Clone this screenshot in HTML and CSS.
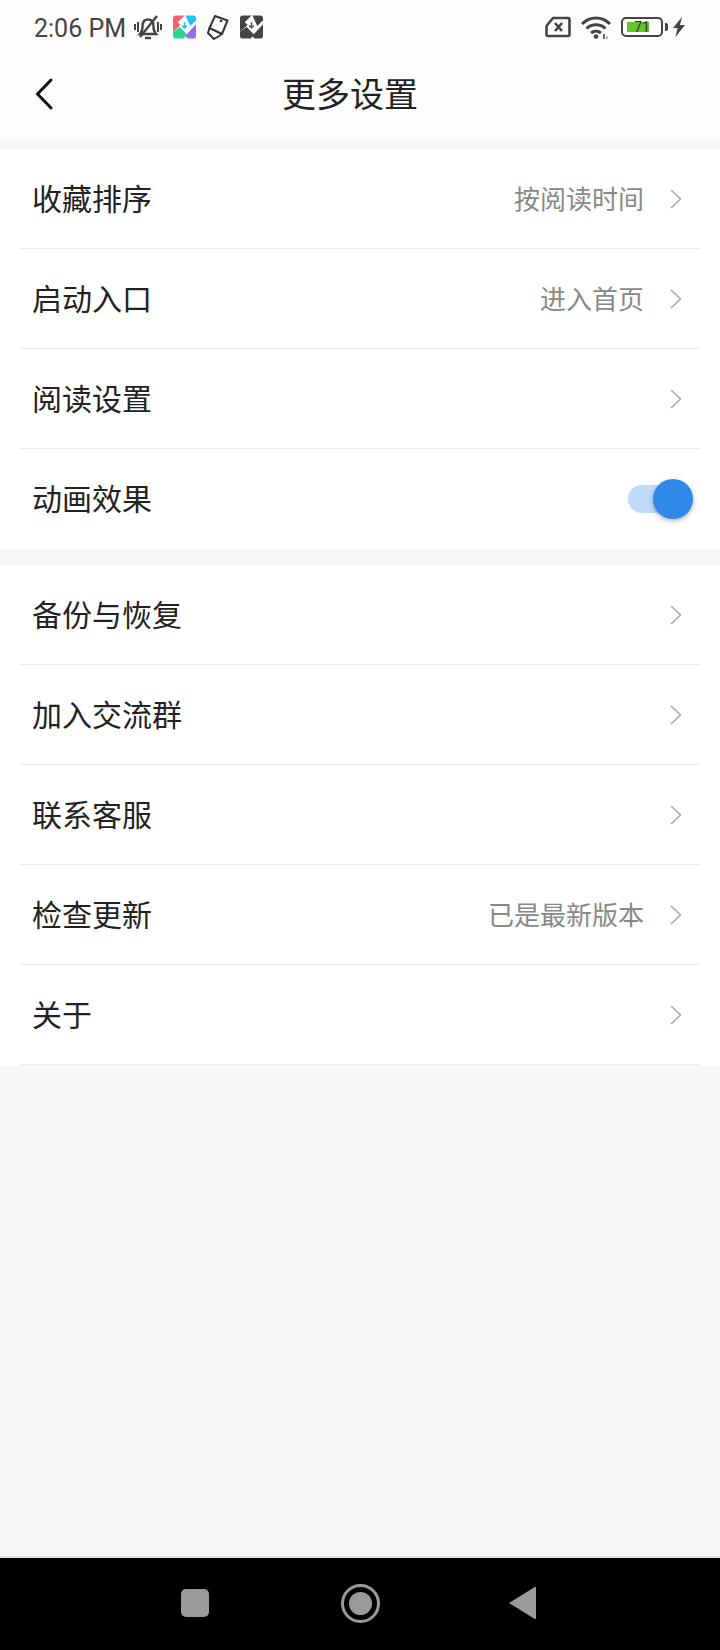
FILE: index.html
```html
<!DOCTYPE html>
<html lang="zh-CN">
<head>
    <meta charset="UTF-8">
    <title>更多设置</title>
    <link rel="stylesheet" href="styles.css">
</head>
<body>
    <div class="phone">
        <div class="status-bar">
            <div class="status-left">
                <span class="clock">2:06 PM</span>
                <svg width="28" height="26" viewBox="0 0 28 26" fill="none" stroke="#444" stroke-width="2.400">
                    <path d="M6 20c2-2 2.500-4 2.500-7.500C8.500 8 10.500 5.500 14 5.500s5.500 2.500 5.500 7c0 3.500.5 5.500 2.500 7.500z"/>
                    <path d="M11 24h6" stroke-width="2.400"/>
                    <path d="M1 10v6M4 8v10M24 8v10M27 10v6" stroke-width="2"/>
                    <path d="M6 23L23 2" stroke-width="2.400"/>
                </svg>
                <svg width="23" height="24" viewBox="0 0 24 24">
                    <path d="M3 0h9L5 7l3 3-8 7V3a3 3 0 0 1 3-3z" fill="#ff5a6e"/>
                    <path d="M13 0h8a3 3 0 0 1 3 3v2l-6 6z" fill="#1cc4f4"/>
                    <path d="M7 12l8 8-4 4H3a3 3 0 0 1-3-3v-4z" fill="#27d68c"/>
                    <path d="M24 9v12a3 3 0 0 1-3 3h-6l-2-3z" fill="#9a6af0"/>
                    <path d="M12 7v6M9.500 10.500l2.500 2.500 2.500-2.500" fill="none" stroke="#25bfe0" stroke-width="1.600"/>
                </svg>
                <svg width="22" height="26" viewBox="0 0 22 26" fill="none" stroke="#333" stroke-width="2" stroke-linejoin="round">
                    <path d="M8 2l12.500 4.500L15 20 2.500 14z"/>
                    <path d="M2.500 14L1 19l6 6 6-3.500 1.500-2"/>
                    <circle cx="14" cy="7" r="1.300" fill="#333" stroke="none"/>
                </svg>
                <svg width="23" height="24" viewBox="0 0 24 24" fill="#444">
                    <path d="M3 0h9L5 7l3 3-8 7V3a3 3 0 0 1 3-3z"/>
                    <path d="M13 0h8a3 3 0 0 1 3 3v2l-6 6z"/>
                    <path d="M7 12l8 8-4 4H3a3 3 0 0 1-3-3v-4z"/>
                    <path d="M24 9v12a3 3 0 0 1-3 3h-6l-2-3z"/>
                    <path d="M12 7v6M9.500 10.500l2.500 2.500 2.500-2.500" fill="none" stroke="#555" stroke-width="1.600"/>
                </svg>
            </div>
            <div class="status-right">
                <svg width="26" height="22" viewBox="0 0 26 22" fill="none" stroke="#444" stroke-width="2.600" stroke-linejoin="round">
                    <path d="M8 2h15a1.500 1.500 0 0 1 1.500 1.500v15a1.500 1.500 0 0 1-1.500 1.500H3a1.500 1.500 0 0 1-1.500-1.500V10z"/>
                    <path d="M10 7l7 8M17 7l-7 8"/>
                </svg>
                <svg width="30" height="24" viewBox="0 0 30 24" fill="none" stroke="#444" stroke-width="3">
                    <path d="M1 9c8-8 20-8 28 0"/>
                    <path d="M5.500 13.500c5.500-5 13.500-5 19 0"/>
                    <path d="M10 18c3-2.500 7-2.500 10 0"/>
                    <circle cx="15" cy="21.500" r="2.300" fill="#444" stroke="none"/>
                    <path d="M23 24v-5" stroke-width="1.600"/>
                    <path d="M26 24v-3" stroke="#aaa" stroke-width="1.600"/>
                </svg>
                <div class="battery">
                    <div class="battery-body">
                        <div class="battery-fill"></div>
                        <span class="battery-num">71</span>
                    </div>
                    <div class="battery-cap"></div>
                </div>
                <svg class="ico-bolt" width="12" height="20" viewBox="0 0 12 20" fill="#444">
                    <path d="M9 0L0 11h4.500L2.500 20 12 8H7z"/>
                </svg>
            </div>
        </div>

        <div class="header">
            <svg class="back" width="20" height="32" viewBox="0 0 20 32" fill="none" stroke="#111" stroke-width="3" stroke-linecap="round" stroke-linejoin="round">
                <path d="M17 2L3.500 16 17 30"/>
            </svg>
            <div class="title">更多设置</div>
        </div>

        <div class="content">
            <div class="section">
                <div class="row">
                    <span class="row-label">收藏排序</span>
                    <span class="row-value">按阅读时间</span>
                    <svg class="chevron" width="14" height="22" viewBox="0 0 14 22" fill="none" stroke="#a6a6a6" stroke-width="1.500"><path d="M2 2l9.500 9L2 20"/></svg>
                </div>
                <div class="row">
                    <span class="row-label">启动入口</span>
                    <span class="row-value">进入首页</span>
                    <svg class="chevron" width="14" height="22" viewBox="0 0 14 22" fill="none" stroke="#a6a6a6" stroke-width="1.500"><path d="M2 2l9.500 9L2 20"/></svg>
                </div>
                <div class="row">
                    <span class="row-label">阅读设置</span>
                    <svg class="chevron" width="14" height="22" viewBox="0 0 14 22" fill="none" stroke="#a6a6a6" stroke-width="1.500"><path d="M2 2l9.500 9L2 20"/></svg>
                </div>
                <div class="row row-last">
                    <span class="row-label">动画效果</span>
                    <div class="switch"><div class="switch-knob"></div></div>
                </div>
            </div>

            <div class="section section-second">
                <div class="row">
                    <span class="row-label">备份与恢复</span>
                    <svg class="chevron" width="14" height="22" viewBox="0 0 14 22" fill="none" stroke="#a6a6a6" stroke-width="1.500"><path d="M2 2l9.500 9L2 20"/></svg>
                </div>
                <div class="row">
                    <span class="row-label">加入交流群</span>
                    <svg class="chevron" width="14" height="22" viewBox="0 0 14 22" fill="none" stroke="#a6a6a6" stroke-width="1.500"><path d="M2 2l9.500 9L2 20"/></svg>
                </div>
                <div class="row">
                    <span class="row-label">联系客服</span>
                    <svg class="chevron" width="14" height="22" viewBox="0 0 14 22" fill="none" stroke="#a6a6a6" stroke-width="1.500"><path d="M2 2l9.500 9L2 20"/></svg>
                </div>
                <div class="row">
                    <span class="row-label">检查更新</span>
                    <span class="row-value">已是最新版本</span>
                    <svg class="chevron" width="14" height="22" viewBox="0 0 14 22" fill="none" stroke="#a6a6a6" stroke-width="1.500"><path d="M2 2l9.500 9L2 20"/></svg>
                </div>
                <div class="row">
                    <span class="row-label">关于</span>
                    <svg class="chevron" width="14" height="22" viewBox="0 0 14 22" fill="none" stroke="#a6a6a6" stroke-width="1.500"><path d="M2 2l9.500 9L2 20"/></svg>
                </div>
            </div>
        </div>

        <div class="nav-bar">
            <div class="nav-square"></div>
            <div class="nav-home"><div class="nav-home-dot"></div></div>
            <svg width="27" height="32" viewBox="0 0 27 32" fill="#9a9a9a"><path d="M25 .5a1 1 0 0 1 2 1v29a1 1 0 0 1-2 1L0 16z"/></svg>
        </div>
    </div>
</body>
</html>
```

FILE: styles.css
```css
* {
    margin: 0;
    padding: 0;
    box-sizing: border-box;
}

body {
    width: 720px;
    height: 1650px;
    background: #f7f7f7;
    font-family: "Noto Sans CJK SC", "Noto Sans", sans-serif;
    overflow: hidden;
}

.phone {
    height: 1650px;
    display: flex;
    flex-direction: column;
}

.status-bar {
    height: 56px;
    background: #fdfdfd;
    padding: 0 34px 2px 34px;
    display: flex;
    align-items: center;
    justify-content: space-between;
}

.status-left {
    display: flex;
    align-items: center;
    gap: 11px;
}

.status-right {
    display: flex;
    align-items: center;
    gap: 10px;
}

.clock {
    font-family: Roboto, sans-serif;
    font-size: 25px;
    color: #444;
    margin-top: 2px;
    margin-right: -3px;
}

.battery {
    display: flex;
    align-items: center;
    gap: 2px;
}

.battery-body {
    width: 42px;
    height: 20px;
    border: 2px solid #444;
    border-radius: 5px;
    position: relative;
    padding: 3px 4px;
}

.battery-fill {
    width: 22px;
    height: 10px;
    background: #63c52b;
}

.battery-num {
    position: absolute;
    top: 0;
    left: 0;
    right: 0;
    text-align: center;
    font-family: Roboto, sans-serif;
    font-size: 14px;
    line-height: 16px;
    color: #333;
}

.battery-cap {
    width: 3px;
    height: 8px;
    background: #444;
    border-radius: 0 2px 2px 0;
}

.ico-bolt {
    margin-left: -5px;
    margin-right: 1px;
}

.header {
    height: 83px;
    background: #fdfdfd;
    padding: 0 20px 10px 0;
    display: flex;
    align-items: center;
    justify-content: center;
    position: relative;
}

.back {
    position: absolute;
    left: 34px;
    top: 22px;
}

.title {
    font-size: 34px;
    color: #222;
}

.content {
    flex: 1;
    padding-top: 10px;
}

.section {
    background: #fff;
    padding-left: 20px;
    padding-right: 20px;
}

.section-second {
    margin-top: 16px;
}

.row {
    height: 100px;
    padding: 0 17px 0 12px;
    display: flex;
    align-items: center;
    border-bottom: 1px solid #ebebeb;
}

.row-last {
    border-bottom: none;
}

.row-label {
    font-size: 30px;
    color: #222;
    flex: 1;
    padding-bottom: 4px;
}

.row-value {
    font-size: 26px;
    color: #888;
    margin-right: 25px;
    padding-bottom: 2px;
}

.switch {
    width: 64px;
    height: 28px;
    margin-right: -9px;
    background: #bfdbf9;
    border-radius: 14px;
    position: relative;
}

.switch-knob {
    position: absolute;
    top: -6px;
    right: -1px;
    width: 40px;
    height: 40px;
    border-radius: 50%;
    background: #2f89e8;
    box-shadow: 0 2px 5px rgba(0, 0, 0, 0.3);
}

.nav-bar {
    height: 94px;
    background: #000;
    border-top: 2px solid #e2e2e2;
    padding: 0 184px 2px 181px;
    display: flex;
    align-items: center;
    justify-content: space-between;
}

.nav-square {
    width: 28px;
    height: 28px;
    background: #9a9a9a;
    border-radius: 5px;
}

.nav-home {
    width: 39px;
    height: 39px;
    margin-left: 3px;
    border: 3px solid #9a9a9a;
    border-radius: 50%;
    display: flex;
    align-items: center;
    justify-content: center;
}

.nav-home-dot {
    width: 23px;
    height: 23px;
    background: #9a9a9a;
    border-radius: 50%;
}
```
